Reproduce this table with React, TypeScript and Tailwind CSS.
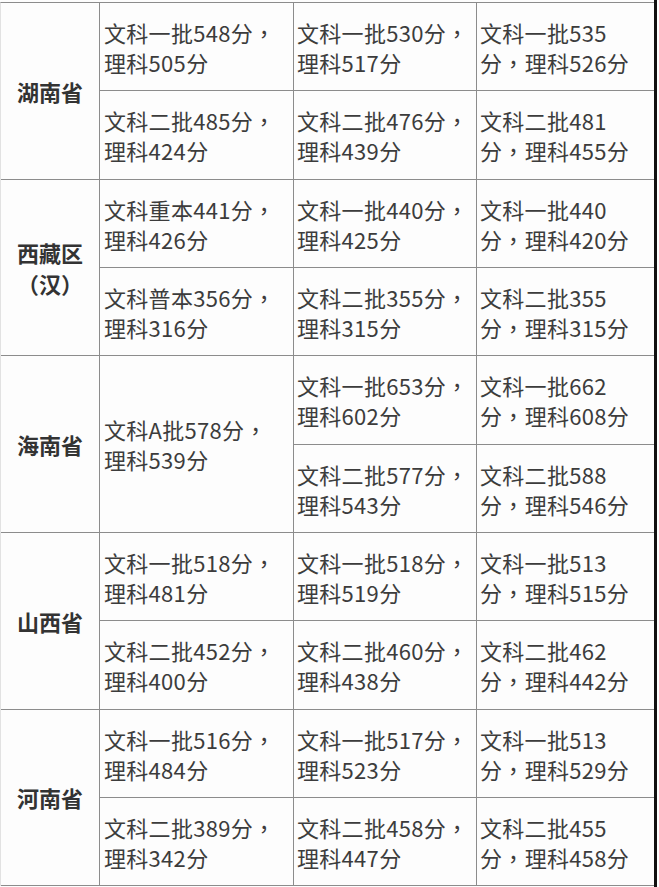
import React from "react";

const LINE = "border-[#8c8c8c]";

function Txt({ s }: { s: string }) {
  const parts = s.split("，");
  return (
    <div>
      {parts.map((p, i) => (
        <React.Fragment key={i}>
          {p}
          {i < parts.length - 1 && (
            <span className="[font-family:'Noto_Sans_CJK_TC','Noto_Sans',sans-serif]">，</span>
          )}
        </React.Fragment>
      ))}
    </div>
  );
}

function Cell({ lines, w, pl, last }: { lines: string[]; w: string; pl: string; last?: boolean }) {
  return (
    <div
      className={`${w} shrink-0 ${pl} ${last ? "" : `border-r ${LINE}`} h-full flex flex-col justify-center text-[22px] leading-[30px] tracking-[0.3px] text-[#3c3c3c] whitespace-nowrap`}
    >
      {lines.map((l, i) => (
        <Txt key={i} s={l} />
      ))}
    </div>
  );
}

type Row = string[][];
type Section = { name: string[]; rows: Row[]; heights: [string, string]; merged?: boolean };

const sections: Section[] = [
  {
    name: ["湖南省"],
    heights: ["h-[88px]", "h-[88px]"],
    rows: [
      [["文科一批548分，", "理科505分"], ["文科一批530分，", "理科517分"], ["文科一批535", "分，理科526分"]],
      [["文科二批485分，", "理科424分"], ["文科二批476分，", "理科439分"], ["文科二批481", "分，理科455分"]],
    ],
  },
  {
    name: ["西藏区", "（汉）"],
    heights: ["h-[88px]", "h-[87px]"],
    rows: [
      [["文科重本441分，", "理科426分"], ["文科一批440分，", "理科425分"], ["文科一批440", "分，理科420分"]],
      [["文科普本356分，", "理科316分"], ["文科二批355分，", "理科315分"], ["文科二批355", "分，理科315分"]],
    ],
  },
  {
    name: ["海南省"],
    heights: ["h-[89px]", "h-[87px]"],
    merged: true,
    rows: [
      [["文科A批578分，", "理科539分"], ["文科一批653分，", "理科602分"], ["文科一批662", "分，理科608分"]],
      [[], ["文科二批577分，", "理科543分"], ["文科二批588", "分，理科546分"]],
    ],
  },
  {
    name: ["山西省"],
    heights: ["h-[88px]", "h-[88px]"],
    rows: [
      [["文科一批518分，", "理科481分"], ["文科一批518分，", "理科519分"], ["文科一批513", "分，理科515分"]],
      [["文科二批452分，", "理科400分"], ["文科二批460分，", "理科438分"], ["文科二批462", "分，理科442分"]],
    ],
  },
  {
    name: ["河南省"],
    heights: ["h-[88px]", "h-[87px]"],
    rows: [
      [["文科一批516分，", "理科484分"], ["文科一批517分，", "理科523分"], ["文科一批513", "分，理科529分"]],
      [["文科二批389分，", "理科342分"], ["文科二批458分，", "理科447分"], ["文科二批455", "分，理科458分"]],
    ],
  },
];

function SectionBlock({ s }: { s: Section }) {
  return (
    <div className={`flex border-b ${LINE}`}>
      <div
        className={`w-[99px] shrink-0 border-r ${LINE} flex flex-col items-center justify-center text-[22px] leading-[31px] font-bold text-[#333333] whitespace-nowrap`}
      >
        {s.name.map((n, i) => (
          <div key={i}>{n}</div>
        ))}
      </div>
      {s.merged ? (
        <div className="flex">
          <Cell lines={s.rows[0][0]} w="w-[194px]" pl="pl-[4px]" />
          <div className="flex flex-col">
            <div className={`flex ${s.heights[0]} border-b ${LINE}`}>
              <Cell lines={s.rows[0][1]} w="w-[183px]" pl="pl-[3px]" />
              <Cell lines={s.rows[0][2]} w="w-[177px]" pl="pl-[3px]" last />
            </div>
            <div className={`flex ${s.heights[1]}`}>
              <Cell lines={s.rows[1][1]} w="w-[183px]" pl="pl-[3px]" />
              <Cell lines={s.rows[1][2]} w="w-[177px]" pl="pl-[3px]" last />
            </div>
          </div>
        </div>
      ) : (
        <div className="flex flex-col">
          {s.rows.map((r, ri) => (
            <div key={ri} className={`flex ${s.heights[ri]} ${ri === 0 ? `border-b ${LINE}` : ""}`}>
              <Cell lines={r[0]} w="w-[194px]" pl="pl-[4px]" />
              <Cell lines={r[1]} w="w-[183px]" pl="pl-[3px]" />
              <Cell lines={r[2]} w="w-[177px]" pl="pl-[3px]" last />
            </div>
          ))}
        </div>
      )}
    </div>
  );
}

export default function App() {
  return (
    <div className="w-[659px] h-[887px] bg-[#fdfdfd] flex overflow-hidden [font-family:'Noto_Sans_CJK_SC','Noto_Sans',sans-serif]">
      <div className="w-[654px] shrink-0 pt-[2px]">
        <div className={`border-t ${LINE} border-l border-l-[#e2e2e2]`}>
          {sections.map((s, i) => (
            <SectionBlock key={i} s={s} />
          ))}
        </div>
      </div>
      <div className="w-[3px] shrink-0 h-full bg-[#111111]" />
      <div className="w-[2px] shrink-0 h-full bg-white" />
    </div>
  );
}
